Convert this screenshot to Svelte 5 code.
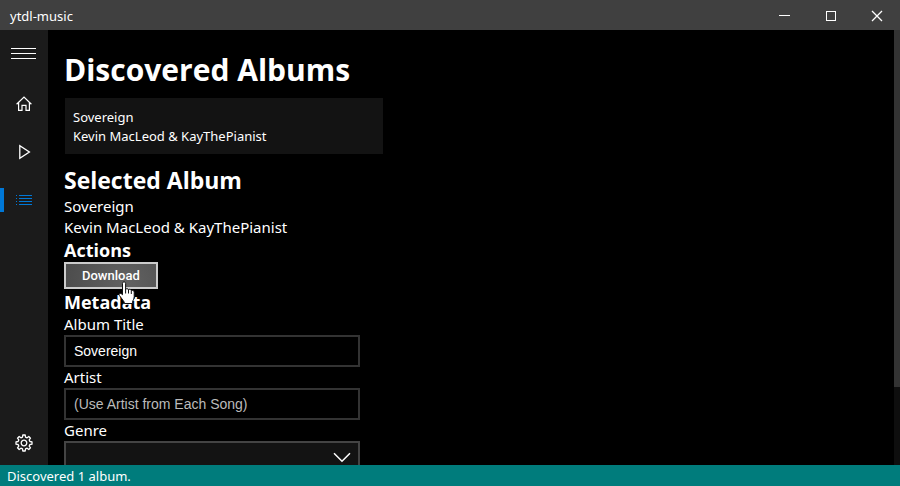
<script>
  const album = { title: 'Sovereign', artist: 'Kevin MacLeod & KayThePianist' };
  let title = $state(album.title);
  let artist = $state('');
  let genre = $state('');
  const genres = ['', 'Classical', 'Electronic', 'Soundtrack'];
</script>

<div class="window">
  <header class="titlebar">
    <span class="app-name">ytdl-music</span>
    <div class="caption">
      <button aria-label="Minimize">
        <svg width="12" height="12" viewBox="0 0 12 12" shape-rendering="crispEdges"><path d="M0 5.5H11" /></svg>
      </button>
      <button aria-label="Maximize">
        <svg width="12" height="12" viewBox="0 0 12 12" shape-rendering="crispEdges"><path d="M1.5 1.5H10.5V10.5H1.5Z" /></svg>
      </button>
      <button aria-label="Close">
        <svg width="12" height="12" viewBox="0 0 12 12"><path d="M1 1L11 11M11 1L1 11" stroke-width="1.3" /></svg>
      </button>
    </div>
  </header>

  <div class="body">
    <nav class="sidebar" aria-label="Main">
      <button class="item" aria-label="Menu">
        <svg width="26" height="14" viewBox="0 0 26 14" shape-rendering="crispEdges"><path d="M0 2.5H25M0 7.5H25M0 12.5H25" /></svg>
      </button>
      <button class="item" aria-label="Home">
        <svg width="16" height="16" viewBox="0 0 16 16"><path d="M.6 8.2L8 1L15.4 8.2M2.6 6.5V14.4H6V9.3H10V14.4H13.4V6.5" stroke-width="1.2" /></svg>
      </button>
      <button class="item" aria-label="Play">
        <svg width="16" height="16" viewBox="0 0 16 16"><path d="M3.8 1.7V14.3L13.4 8Z" stroke-width="1.3" /></svg>
      </button>
      <button class="item active" aria-label="Albums">
        <svg width="16" height="16" viewBox="0 0 16 16" shape-rendering="crispEdges"><path d="M0 3.5H1M3 3.5H16M0 6.5H1M3 6.5H16M0 9.5H1M3 9.5H16M0 12.5H1M3 12.5H16" /></svg>
      </button>
      <button class="item settings" aria-label="Settings">
        <svg width="18" height="18" viewBox="-9 -9 18 18">
          <path d="M-1.5 -5.9L-1.2 -8H1.2L1.5 -5.9L3.1 -5.2L4.8 -6.5L6.5 -4.8L5.2 -3.1L5.9 -1.5L8 -1.2V1.2L5.9 1.5L5.2 3.1L6.5 4.8L4.8 6.5L3.1 5.2L1.5 5.9L1.2 8H-1.2L-1.5 5.9L-3.1 5.2L-4.8 6.5L-6.5 4.8L-5.2 3.1L-5.9 1.5L-8 1.2V-1.2L-5.9 -1.5L-5.2 -3.1L-6.5 -4.8L-4.8 -6.5L-3.1 -5.2Z" stroke-width="1.3" stroke-linejoin="round" />
          <circle r="2.8" stroke-width="1.3" />
        </svg>
      </button>
    </nav>

    <main>
      <h1>Discovered Albums</h1>
      <button class="card">
        <span>{album.title}</span>
        <span>{album.artist}</span>
      </button>

      <h2>Selected Album</h2>
      <p>{album.title}</p>
      <p>{album.artist}</p>

      <h3>Actions</h3>
      <div class="action">
        <button class="download">Download</button>
        <svg class="pointer" width="18" height="25" viewBox="0 0 18 25" aria-hidden="true">
          <path d="M4.5 2.5C4.5 .4 7.6 .4 7.6 2.5V8.4C8.2 7.3 10.2 7.5 10.5 8.8C11.4 7.9 13 8.3 13.3 9.6C14.5 8.9 16.2 9.7 16.2 11.2V15.6C16.2 18 14.8 19.3 14.5 21.2V22.5H6.2V21C4.6 19 3.2 16.7 1.4 14.5C.2 12.7 2.4 11.4 4.5 13.7Z" />
          <path class="fingers" d="M7.6 8V12.5M10.5 9V12.5M13.3 9.8V13" />
        </svg>
      </div>

      <h3>Metadata</h3>
      <form>
        <label for="title">Album Title</label>
        <input id="title" type="text" bind:value={title} />
        <label for="artist">Artist</label>
        <input id="artist" type="text" placeholder="(Use Artist from Each Song)" bind:value={artist} />
        <label for="genre">Genre</label>
        <div class="select">
          <select id="genre" bind:value={genre}>
            {#each genres as name}
              <option value={name}>{name}</option>
            {/each}
          </select>
          <svg class="chevron" width="18" height="11" viewBox="0 0 18 11"><path d="M1 1.2L9 9.2L17 1.2" stroke-width="1.5" /></svg>
        </div>
      </form>
    </main>
    <div class="scrollbar"><div class="thumb"></div></div>
  </div>

  <footer>Discovered 1 album.</footer>
</div>

<style>
  :global(body) {
    background: #000;
  }
  .window {
    display: flex;
    flex-direction: column;
    height: 100vh;
    overflow: hidden;
    background: #000;
    color: #fff;
    font-family: 'Segoe UI', 'Noto Sans', 'Open Sans', sans-serif;
    font-size: 15px;
  }
  h1, h2, h3, p {
    margin: 0;
  }
  h1, h2, h3 {
    font-family: 'Segoe UI', 'Open Sans', 'Noto Sans', sans-serif;
    font-weight: 700;
  }
  button {
    margin: 0;
    padding: 0;
    border: 0;
    background: none;
    color: inherit;
    font: inherit;
  }
  svg {
    display: block;
    fill: none;
    stroke: currentColor;
  }
  .titlebar {
    display: flex;
    justify-content: space-between;
    flex: none;
    height: 30px;
    background: #404040;
    line-height: 32px;
    font-size: 13px;
  }
  .app-name {
    padding-left: 10px;
  }
  .caption {
    display: flex;
  }
  .caption button {
    display: grid;
    place-items: center;
    width: 46px;
    height: 32px;
  }
  .body {
    display: flex;
    flex: 1;
    min-height: 0;
  }
  .sidebar {
    display: flex;
    flex-direction: column;
    flex: none;
    width: 48px;
    background: #1b1b1b;
  }
  .item {
    display: grid;
    place-items: center;
    height: 48px;
  }
  .item:first-child {
    height: 46px;
    margin-bottom: 4px;
  }
  .active {
    color: #0078d7;
    position: relative;
  }
  .active::before {
    content: '';
    position: absolute;
    left: 0;
    top: 12px;
    width: 4px;
    height: 24px;
    background: #0078d7;
  }
  .settings {
    margin-top: auto;
    height: 44px;
  }
  main {
    flex: 1;
    min-width: 0;
    overflow: hidden;
    padding: 18px 16px 0;
  }
  h1 {
    font-size: 30px;
    line-height: 43px;
  }
  .card {
    display: flex;
    flex-direction: column;
    width: 100%;
    max-width: 318px;
    margin: 7px 1px 10px;
    padding: 10px 8px 8px;
    background: #131313;
    text-align: left;
    font-size: 13px;
    line-height: 19px;
  }
  h2 {
    font-size: 23px;
    line-height: 32px;
  }
  p, label {
    line-height: 21px;
  }
  h3 {
    font-size: 18px;
    line-height: 24px;
  }
  .action {
    position: relative;
    display: flex;
    margin-bottom: 1px;
  }
  .download {
    height: 27px;
    padding: 0 16px;
    border: 2px solid #ccc;
    background: radial-gradient(circle at 60px 20px, #626262, #484848 75px);
    font-family: Roboto, sans-serif;
    font-size: 13px;
    font-weight: 500;
  }
  .pointer {
    position: absolute;
    left: 54px;
    top: 19px;
    fill: #fff;
    stroke: #111;
  }
  .fingers {
    fill: none;
  }
  form {
    display: flex;
    flex-direction: column;
    max-width: 296px;
  }
  input, select {
    box-sizing: border-box;
    width: 100%;
    height: 32px;
    margin: 0;
    padding: 0 8px;
    border: 2px solid #333;
    border-radius: 0;
    background: #000;
    color: #fff;
    font-family: 'Liberation Sans', Arial, sans-serif;
    font-size: 14px;
  }
  input::placeholder {
    color: #bbb;
    opacity: 1;
  }
  .select {
    position: relative;
  }
  select {
    display: block;
    appearance: none;
    border-color: #444;
    background: #131313;
  }
  .chevron {
    position: absolute;
    right: 9px;
    top: 11px;
    pointer-events: none;
  }
  .scrollbar {
    flex: none;
    width: 6px;
    background: #0e0e0e;
  }
  .thumb {
    height: 82%;
    background: #333;
  }
  footer {
    flex: none;
    padding: 2px 7px 0;
    background: #007c7c;
    font-size: 13px;
    line-height: 19px;
  }
</style>
